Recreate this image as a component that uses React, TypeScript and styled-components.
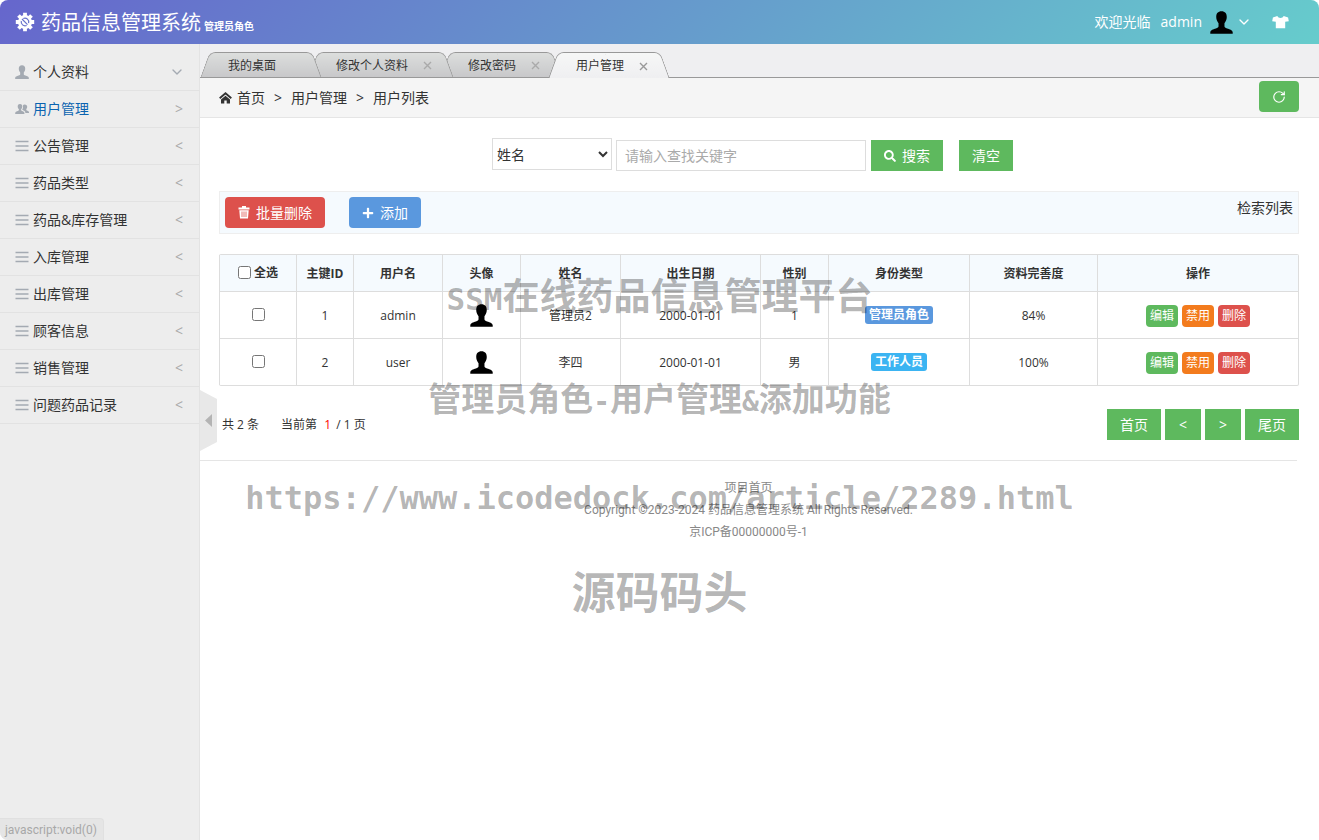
import React from "react";
import styled, { createGlobalStyle, css } from "styled-components";
import { FaPlus, FaSearch } from "react-icons/fa";
import { ChevronDown, RotateCw } from "lucide-react";

const sans = `"Open Sans", "Noto Sans CJK SC", sans-serif`;

const GlobalStyle = createGlobalStyle`
  *, *::before, *::after { box-sizing: border-box; }
  body { margin: 0; background: #fff; font: 14px/20px ${sans}; color: #333; }
  button, input, select { font: inherit; margin: 0; }
  a { color: inherit; text-decoration: none; }
`;

const Shell = styled.div`
  position: relative;
  display: flex;
  flex-direction: column;
  min-height: 100vh;
  border-radius: 8px;
  overflow: hidden;
`;

const Header = styled.header`
  display: flex;
  align-items: center;
  justify-content: space-between;
  height: 44px;
  padding: 0 30px 0 15px;
  color: #fff;
  background: linear-gradient(135deg, #66c, #6cc);
`;

const Brand = styled.div`
  display: flex;
  align-items: center;
  white-space: nowrap;
`;

const BrandName = styled.h1`
  margin: 0 3px 0 6px;
  padding-top: 2px;
  font-size: 20px;
  line-height: 42px;
  font-weight: 400;
`;

const BrandRole = styled.strong`
  padding-top: 8px;
  font-size: 10px;
`;

const Account = styled.div`
  display: flex;
  align-items: center;
`;

const AccountMenu = styled.button`
  display: flex;
  align-items: center;
  gap: 3px;
  margin: 0 20px 0 10px;
  padding: 0;
  border: 0;
  background: none;
  color: inherit;
`;

const Avatar = styled.span`
  display: flex;
  margin-left: 5px;
  color: #000;
`;

const IconButton = styled.button`
  display: flex;
  padding: 0;
  border: 0;
  background: none;
  color: inherit;
`;

const Body = styled.div`
  display: flex;
  flex: 1;
`;

const Sidebar = styled.nav`
  flex: 0 0 200px;
  padding-top: 10px;
  background: #ededed;
  border-right: 1px solid #e3e3e3;
`;

const MenuItem = styled.button<{ $active?: boolean }>`
  display: flex;
  align-items: center;
  gap: 4px;
  width: 100%;
  height: 37px;
  padding: 0 15px;
  border: 0;
  border-bottom: 1px solid #e2e2e2;
  background: none;
  color: ${(p) => (p.$active ? "#0a63b0" : "#333")};
  text-align: left;
  svg { color: #a4aab2; }
`;

const MenuLabel = styled.span`
  flex: 1;
`;

const MenuArrow = styled.span`
  display: flex;
  padding-right: 1px;
  color: #aaa;
`;

const MenuChevron = styled.span`
  display: flex;
  margin-right: -1px;
`;

const Main = styled.main`
  flex: 1;
  min-width: 0;
`;

const TabBar = styled.div`
  display: flex;
  align-items: flex-end;
  height: 34px;
  padding-left: 1px;
  background: #efeff1;
  border-bottom: 1px solid #999;
`;

const tabSide = css`
  content: "";
  position: absolute;
  z-index: -1;
  top: 0;
  bottom: 0;
  border: 1px solid #999;
  border-bottom: 0;
`;

const Tab = styled.div<{ $active?: boolean; $order: number }>`
  position: relative;
  z-index: ${(p) => (p.$active ? 9 : p.$order)};
  isolation: isolate;
  display: flex;
  align-items: center;
  gap: 15px;
  height: ${(p) => (p.$active ? 26 : 25)}px;
  margin: 0 0 ${(p) => (p.$active ? -1 : 0)}px;
  padding: 2px 21px 0 27px;
  font-size: 12px;
  white-space: nowrap;
  & + & { margin-left: -12px; }
  &::before, &::after {
    ${tabSide}
    background: ${(p) => (p.$active ? "linear-gradient(#f6f7f7, #efeff1)" : "linear-gradient(#dcdedd, #c8c8ca)")};
  }
  &::before {
    left: 4px;
    right: 40%;
    border-right: 0;
    border-top-left-radius: 6px;
    transform: skewX(-20deg);
  }
  &::after {
    left: 50%;
    right: 4px;
    border-left: 0;
    border-top-right-radius: 6px;
    transform: skewX(20deg);
  }
`;

const TabSpacer = styled.span`
  width: 9px;
`;

const TabClose = styled.button<{ $active?: boolean }>`
  display: flex;
  width: 9px;
  padding: 0;
  border: 0;
  background: none;
  color: ${(p) => (p.$active ? "#999" : "#aaa")};
`;

const Crumbs = styled.div`
  display: flex;
  align-items: center;
  justify-content: space-between;
  height: 40px;
  padding: 0 20px 0 19px;
  background: #f5f5f5;
  border-bottom: 1px solid #e5e5e5;
`;

const CrumbPath = styled.div`
  display: flex;
  align-items: center;
  gap: 9px;
`;

const CrumbHome = styled.a`
  display: flex;
  align-items: center;
  gap: 5px;
`;

const Button = styled.button<{ $bg?: string; $round?: boolean }>`
  display: inline-flex;
  align-items: center;
  justify-content: center;
  gap: 6px;
  min-width: 36px;
  height: 31px;
  padding: 0 13px;
  border: 0;
  border-radius: ${(p) => (p.$round ? 4 : 0)}px;
  background: ${(p) => p.$bg || "#5eb95e"};
  color: #fff;
  white-space: nowrap;
`;

const RefreshButton = styled(Button)`
  margin-bottom: 2px;
`;

const Content = styled.div`
  padding: 20px 20px 0 19px;
`;

const SearchForm = styled.form`
  display: flex;
  align-items: flex-end;
  justify-content: center;
  height: 33px;
  padding-right: 13px;
`;

const FieldSelect = styled.select`
  align-self: flex-start;
  width: 120px;
  height: 32px;
  margin-right: 4px;
  border: 1px solid #ddd;
  background: #fff;
  color: #333;
`;

const FieldInput = styled.input`
  width: 250px;
  height: 31px;
  margin-right: 5px;
  padding: 0 8px;
  border: 1px solid #ddd;
  &::placeholder { color: #aaa; }
`;

const ClearButton = styled(Button)`
  margin-left: 16px;
`;

const Actions = styled.div`
  display: flex;
  gap: 24px;
  margin-top: 20px;
  padding: 5px;
  background: #f5fafe;
  border: 1px solid #eee;
  height: 43px;
`;

const ActionsNote = styled.span`
  margin-left: auto;
  padding-top: 1px;
`;

const Table = styled.table`
  width: 100%;
  margin-top: 20px;
  table-layout: fixed;
  border-collapse: separate;
  border-spacing: 0;
  border: 1px solid #ddd;
  border-left: 0;
  border-radius: 2px;
  font-size: 12px;
  text-align: center;
  th, td { padding: 2px 0 0; border-left: 1px solid #ddd; vertical-align: middle; }
  th { height: 36px; background: #f5fafe; font-weight: 700; }
  td { height: 47px; border-top: 1px solid #ddd; }
  input { width: 13px; height: 13px; margin: 0 0 2px; vertical-align: -1px; }
  svg { display: block; margin: 0 auto 2px; color: #000; }
`;

const CheckLabel = styled.label`
  display: inline-flex;
  align-items: center;
  gap: 3px;
`;

const RoleTag = styled.span<{ $bg: string }>`
  display: block;
  width: fit-content;
  margin: 0 auto 2px;
  padding: 0 4px;
  border-radius: 3px;
  background: ${(p) => p.$bg};
  color: #fff;
  font-weight: 700;
  line-height: 18px;
`;

const RowActions = styled.div`
  display: flex;
  justify-content: center;
  gap: 4px;
`;

const RowButton = styled.button<{ $bg: string }>`
  height: 22px;
  padding: 0 4px;
  border: 0;
  border-radius: 4px;
  background: ${(p) => p.$bg};
  color: #fff;
  line-height: 22px;
`;

const Pager = styled.div`
  display: flex;
  align-items: center;
  justify-content: space-between;
  margin-top: 23px;
  padding-left: 3px;
  font-size: 12px;
`;

const PagerText = styled.div`
  display: flex;
  gap: 22px;
  word-spacing: normal;
  em { color: #f00; font-style: normal; padding: 0 2px 0 4px; }
`;

const PagerButtons = styled.div`
  display: flex;
  gap: 4px;
  font-size: 14px;
`;

const Footer = styled.footer`
  margin: 20px 22px 0 0;
  padding-top: 16px;
  border-top: 1px solid #e5e5e5;
  color: #888;
  font-family: Roboto, "Noto Sans CJK SC", sans-serif;
  font-size: 12px;
  line-height: 22px;
  text-align: center;
  p { margin: 0; }
`;

const CollapseHandle = styled.button`
  position: absolute;
  left: 200px;
  top: calc(50% - 30px);
  padding: 0;
  border: 0;
  background: none;
  display: flex;
`;

const StatusBubble = styled.div`
  position: absolute;
  left: 0;
  bottom: 0;
  padding: 2px 6px 0 5px;
  border-radius: 0 4px 0 0;
  border: 1px solid #e0e0e0;
  border-width: 1px 1px 0 0;
  background: #e5e5e5;
  color: #a8a8a8;
  font-family: Roboto, sans-serif;
  font-size: 12px;
  line-height: 19px;
`;

const Watermark = styled.div`
  position: absolute;
  left: 0;
  right: 0;
  top: 246px;
  display: grid;
  grid-template-rows: 104px 102px 92px 100px;
  place-items: center;
  color: rgba(0, 0, 0, 0.3);
  font-family: "DejaVu Sans Mono", "Noto Sans CJK SC", monospace;
  font-weight: 700;
  white-space: nowrap;
  pointer-events: none;
`;

const MarkLine = styled.div<{ $size: number }>`
  font-size: ${(p) => p.$size}px;
`;

const MarkLatin = styled.span<{ $size: number }>`
  font-size: ${(p) => p.$size}px;
`;

const Person = ({ size }: { size: number }) => (
  <svg width={size} height={size} viewBox="0 0 24 24" fill="currentColor" aria-hidden="true">
    <path d="M12 .3C8.300.3 6.500 2.600 6.500 6.300c0 3 1.300 4.900 2.400 6.500v3.200c0 1.200-1 1.700-2.700 2.200C3 19.100.3 20 .3 22.300v1.500h23.400v-1.500c0-2.300-2.700-3.200-5.900-4.100-1.700-.5-2.700-1-2.700-2.200v-3.200c1.100-1.600 2.400-3.500 2.400-6.500C17.500 2.600 15.700.3 12 .3z" />
  </svg>
);

const People = () => (
  <svg width="14" height="14" viewBox="0 0 14 14" fill="currentColor" aria-hidden="true">
    <path d="M5 2C3.300 2 2.600 3.200 2.700 4.700c.1 1.200.6 2 1.200 2.600v1C3.400 9.200.8 9.200.2 10.700V12h9.200v-1.300C8.800 9.200 6.500 9.200 6.100 8.300v-1c.6-.6 1.100-1.400 1.200-2.600C7.400 3.200 6.700 2 5 2z" />
    <path d="M9.600 2.600c-.8 0-1.400.3-1.700.8.4 1.700.1 3.100-.7 4.200.2.6 2.500.9 3.100 2.500V11H14V9.900c-.5-1.200-2.400-1.200-2.700-2v-.8c.5-.5.8-1.100.9-2 .1-1.500-.9-2.500-2.600-2.500z" />
  </svg>
);

const Bars = () => (
  <svg width="14" height="14" viewBox="0 0 14 14" stroke="currentColor" strokeWidth="1.4" aria-hidden="true">
    <path d="M.5 2.500h13M.5 7h13M.5 11.500h13" />
  </svg>
);

const Gear = () => (
  <svg width="20" height="20" viewBox="0 0 20 20" fill="none" aria-hidden="true">
    <circle cx="10" cy="10" r="7" fill="#fff" />
    <path d="M10 .8v18.400M.8 10h18.400M3.500 3.500l13 13M16.500 3.500l-13 13" stroke="#fff" strokeWidth="3.800" />
    <path d="M6.300 9a3.900 3.900 0 0 0 5.300 4.500M8.300 6.500a3.900 3.900 0 0 1 5.300 4.700M7 7l5.500 5.700" stroke="#6670cb" strokeWidth="1.200" />
  </svg>
);

const Home = () => (
  <svg width="13" height="12" viewBox="0 0 13 12" aria-hidden="true">
    <path d="M.7 6.300 6.500 1.300l5.800 5" fill="none" stroke="currentColor" strokeWidth="1.900" />
    <path d="M2 7.600 6.500 3.800 11 7.600V11.500H7.700V8.500H5.300v3H2z" fill="currentColor" />
  </svg>
);

const Shirt = () => (
  <svg width="17" height="14" viewBox="0 0 17 14" fill="currentColor" aria-hidden="true">
    <path d="M5.300 1 .9 2.400.2 6.300l3.600.5v6.400h9.400V6.800l3.600-.5-.7-3.900L11.700 1c-.6 1.300-1.700 2-3.200 2S5.900 2.300 5.300 1z" />
  </svg>
);

const Bin = () => (
  <svg width="12" height="13" viewBox="0 0 12 13" aria-hidden="true">
    <path fill="currentColor" d="M4 0h4v1.500h3.500v2H.5v-2H4zM1.300 4.300h9.400L10 12.500H2z" />
    <path stroke="#dd514c" strokeWidth=".8" d="M4 5.500v5.500M6 5.500v5.500M8 5.500v5.500" />
  </svg>
);

const Cross = () => (
  <svg width="9" height="9" viewBox="0 0 9 9" stroke="currentColor" strokeWidth="1.400" aria-hidden="true">
    <path d="M1 1l7 7M8 1L1 8" />
  </svg>
);

const menu = ["公告管理", "药品类型", "药品&库存管理", "入库管理", "出库管理", "顾客信息", "销售管理", "问题药品记录"];

const tabs = [
  { label: "修改个人资料" },
  { label: "修改密码" },
  { label: "用户管理", active: true },
];

const columns = [
  { label: "主键ID", width: 57 },
  { label: "用户名", width: 89 },
  { label: "头像", width: 78 },
  { label: "姓名", width: 100 },
  { label: "出生日期", width: 140 },
  { label: "性别", width: 68 },
  { label: "身份类型", width: 141 },
  { label: "资料完善度", width: 128 },
  { label: "操作", width: 201 },
];

const users = [
  { id: 1, login: "admin", name: "管理员2", birth: "2000-01-01", sex: "1", role: "管理员角色", color: "#5a98de", done: "84%" },
  { id: 2, login: "user", name: "李四", birth: "2000-01-01", sex: "男", role: "工作人员", color: "#3bb4f2", done: "100%" },
];

export default function App() {
  return (
    <Shell>
      <GlobalStyle />
      <Header>
        <Brand>
          <Gear />
          <BrandName>药品信息管理系统</BrandName>
          <BrandRole>管理员角色</BrandRole>
        </Brand>
        <Account>
          <span>欢迎光临</span>
          <AccountMenu>
            admin
            <Avatar><Person size={23} /></Avatar>
            <ChevronDown size={16} />
          </AccountMenu>
          <IconButton aria-label="换肤"><Shirt /></IconButton>
        </Account>
      </Header>
      <Body>
        <Sidebar>
          <MenuItem>
            <Person size={14} />
            <MenuLabel>个人资料</MenuLabel>
            <MenuChevron><ChevronDown size={16} strokeWidth={2} /></MenuChevron>
          </MenuItem>
          <MenuItem $active>
            <People />
            <MenuLabel>用户管理</MenuLabel>
            <MenuArrow>&gt;</MenuArrow>
          </MenuItem>
          {menu.map((label) => (
            <MenuItem key={label}>
              <Bars />
              <MenuLabel>{label}</MenuLabel>
              <MenuArrow>&lt;</MenuArrow>
            </MenuItem>
          ))}
        </Sidebar>
        <Main>
          <TabBar>
            <Tab $order={8}>
              我的桌面
              <TabSpacer />
            </Tab>
            {tabs.map((tab, i) => (
              <Tab key={tab.label} $active={tab.active} $order={7 - i}>
                {tab.label}
                <TabClose $active={tab.active} aria-label="关闭"><Cross /></TabClose>
              </Tab>
            ))}
          </TabBar>
          <Crumbs>
            <CrumbPath>
              <CrumbHome href="#"><Home />首页</CrumbHome>
              <span>&gt;</span>
              <span>用户管理</span>
              <span>&gt;</span>
              <span>用户列表</span>
            </CrumbPath>
            <RefreshButton $round aria-label="刷新"><RotateCw size={14} /></RefreshButton>
          </Crumbs>
          <Content>
            <SearchForm onSubmit={(e) => e.preventDefault()}>
              <FieldSelect aria-label="查找字段"><option>姓名</option></FieldSelect>
              <FieldInput aria-label="关键字" placeholder="请输入查找关键字" />
              <Button type="submit"><FaSearch size={12} />搜索</Button>
              <ClearButton type="reset">清空</ClearButton>
            </SearchForm>
            <Actions>
              <Button $round $bg="#dd514c"><Bin />批量删除</Button>
              <Button $round $bg="#5a98de"><FaPlus size={12} />添加</Button>
              <ActionsNote>检索列表</ActionsNote>
            </Actions>
            <Table>
              <colgroup>
                <col style={{ width: 77 }} />
                {columns.map((c) => <col key={c.label} style={{ width: c.width }} />)}
              </colgroup>
              <thead>
                <tr>
                  <th><CheckLabel><input type="checkbox" />全选</CheckLabel></th>
                  {columns.map((c) => <th key={c.label}>{c.label}</th>)}
                </tr>
              </thead>
              <tbody>
                {users.map((u) => (
                  <tr key={u.id}>
                    <td><input type="checkbox" aria-label={u.login} /></td>
                    <td>{u.id}</td>
                    <td>{u.login}</td>
                    <td><Person size={23} /></td>
                    <td>{u.name}</td>
                    <td>{u.birth}</td>
                    <td>{u.sex}</td>
                    <td><RoleTag $bg={u.color}>{u.role}</RoleTag></td>
                    <td>{u.done}</td>
                    <td>
                      <RowActions>
                        <RowButton $bg="#5eb95e">编辑</RowButton>
                        <RowButton $bg="#f37b1d">禁用</RowButton>
                        <RowButton $bg="#dd514c">删除</RowButton>
                      </RowActions>
                    </td>
                  </tr>
                ))}
              </tbody>
            </Table>
            <Pager>
              <PagerText>
                <span>共 2 条</span>
                <span>当前第 <em>1</em> / 1 页</span>
              </PagerText>
              <PagerButtons>
                <Button>首页</Button>
                <Button>&lt;</Button>
                <Button>&gt;</Button>
                <Button>尾页</Button>
              </PagerButtons>
            </Pager>
          </Content>
          <Footer>
            <p><a href="#">项目首页</a></p>
            <p>Copyright ©2023-2024 药品信息管理系统 All Rights Reserved.</p>
            <p>京ICP备00000000号-1</p>
          </Footer>
        </Main>
      </Body>
      <CollapseHandle aria-label="收起菜单">
        <svg width="17" height="61" viewBox="0 0 17 61" aria-hidden="true">
          <path fill="#e8e8e8" d="M0 0l17 9v43L0 61z" />
          <path fill="#b4b4b4" d="M12 24v13l-7-6.500z" />
        </svg>
      </CollapseHandle>
      <Watermark aria-hidden="true">
        <MarkLine $size={37}><MarkLatin $size={31}>SSM</MarkLatin>在线药品信息管理平台</MarkLine>
        <MarkLine $size={33}>管理员角色<MarkLatin $size={28}>-</MarkLatin>用户管理<MarkLatin $size={28}>&amp;</MarkLatin>添加功能</MarkLine>
        <MarkLine $size={32}>https://www.icodedock.com/article/2289.html</MarkLine>
        <MarkLine $size={44}>源码码头</MarkLine>
      </Watermark>
      <StatusBubble>javascript:void(0)</StatusBubble>
    </Shell>
  );
}
